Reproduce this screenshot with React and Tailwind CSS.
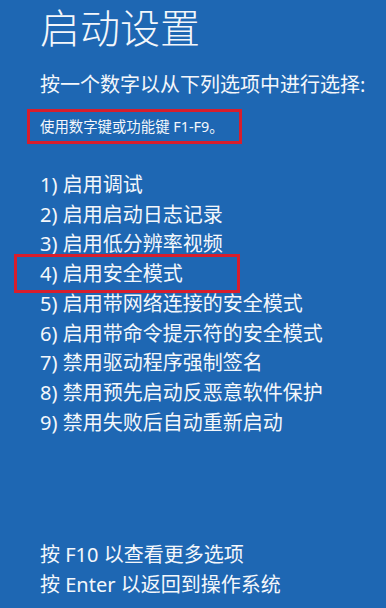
const items = [
  '1) 启用调试',
  '2) 启用启动日志记录',
  '3) 启用低分辨率视频',
  '4) 启用安全模式',
  '5) 启用带网络连接的安全模式',
  '6) 启用带命令提示符的安全模式',
  '7) 禁用驱动程序强制签名',
  '8) 禁用预先启动反恶意软件保护',
  '9) 禁用失败后自动重新启动',
];

export default function App() {
  return (
    <div
      className="flex h-[608px] w-[386px] flex-col overflow-hidden bg-[#1e67b3] pl-[40px] text-[#f4f7fb]"
      style={{ fontFamily: '"Noto Sans", "Noto Sans CJK SC", sans-serif' }}
    >
      <h1 className="pt-[4px] text-[40px] font-light leading-[48px]">启动设置</h1>
      <p className="mt-[18px] text-[20px] leading-[30px]">按一个数字以从下列选项中进行选择:</p>
      <div className="-ml-[13px] mt-[9px] w-[215px] border-[3px] border-[#d81e2c] pl-[10px] text-[14.4px] leading-[29px]">
        使用数字键或功能键 F1-F9。
      </div>
      <ul className="mt-[26px]">
        {items.map((t, i) => (
          <li key={t} className="relative text-[20px] leading-[29.7px]">
            {t}
            {i === 3 && (
              <span className="absolute -left-[26px] -top-[5px] -bottom-[4px] w-[226px] border-[3px] border-[#d81e2c]" />
            )}
          </li>
        ))}
      </ul>
      <div className="mt-auto pb-[8px] text-[20px] leading-[30px]">
        <p>按 F10 以查看更多选项</p>
        <p>按 Enter 以返回到操作系统</p>
      </div>
    </div>
  );
}
